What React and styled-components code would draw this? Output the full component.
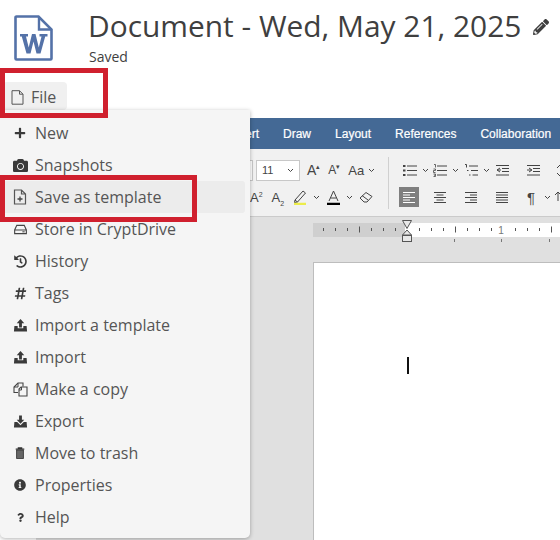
import React from "react";
import styled, { createGlobalStyle } from "styled-components";
import { FaPlus, FaCamera, FaHistory, FaHashtag, FaInfoCircle, FaQuestion, FaPencilAlt } from "react-icons/fa";

const Global = createGlobalStyle`
  html, body { margin: 0; padding: 0; background: #fff; }
  body { font-family: "Open Sans", sans-serif; color: #3f3f3f; }
`;
const Page = styled.div`
  position: relative; width: 560px; height: 540px; overflow: hidden; background: #fff;
  display: flex; flex-direction: column;
`;
const Header = styled.header`
  display: flex; height: 82px; padding: 0 0 0 14px; box-sizing: border-box;
`;
const DocIcon = styled.svg`
  width: 39px; height: 46px; margin-top: 15px; flex: none;
`;
const TitleBlock = styled.div`
  margin-left: 35px; display: flex; flex-direction: column;
`;
const TitleRow = styled.div`
  display: flex; align-items: center; gap: 12px; height: 49px; margin-top: 1px;
`;
const Title = styled.h1`
  margin: 0; font-weight: 400; font-size: 29.9px; line-height: 49px; color: #3f3f3f; white-space: nowrap;
`;
const PencilWrap = styled.span`
  display: flex; margin-top: 2px; margin-left: 0; color: #3f3f3f;
`;
const Saved = styled.div`
  font-size: 14px; line-height: 16px; color: #3f3f3f; margin-left: 1px; margin-top: -1px;
`;
const FileBar = styled.div`
  height: 36px; padding-left: 3px;
`;
const FileButton = styled.button`
  display: flex; align-items: center; gap: 7px; height: 28px; width: 64px; padding: 2px 0 0 8px; box-sizing: border-box;
  background: #f0f0f0; border: 0; border-radius: 4px; font: 400 16px "Open Sans", sans-serif; color: #555;
`;
const Editor = styled.main`
  flex: 1; display: flex; flex-direction: column; min-height: 0; padding-left: 36px; background: #fff;
`;
const Tabs = styled.nav`
  height: 31px; flex: none; background: #446995; display: flex; align-items: center; gap: 24px; padding-left: 209px;
`;
const Tab = styled.span`
  font: 400 12px "Liberation Sans", sans-serif; color: #fff; -webkit-text-stroke: 0.2px #fff; white-space: nowrap;
`;
const Toolbar = styled.div`
  height: 68px; flex: none; background: #f1f1f1; border-bottom: 1px solid #cbcbcb; box-sizing: border-box;
  display: flex; padding-left: 204px; padding-top: 10px;
`;
const ToolColumn = styled.div`
  display: flex; flex-direction: column; gap: 5px; width: ${p => p.$w}px; flex: none;
`;
const ToolRow = styled.div`
  display: flex; align-items: center; height: 22px; flex: none; padding-left: ${p => p.$pl || 0}px;
`;
const Divider = styled.div`
  width: 1px; height: 52px; background: #d0d0d0; margin-top: -2px; flex: none;
`;
const Select = styled.div`
  width: 44px; height: 21px; box-sizing: border-box; background: #fff; border: 1px solid #c8c8c8; display: flex; align-items: center;
  justify-content: space-between; padding: 0 5px; font: 400 11px "Liberation Sans", sans-serif; color: #444; flex: none;
`;
const SelectStub = styled.div`
  width: 13px; height: 21px; margin-right: 3px; box-sizing: border-box; background: #fff; border: 1px solid #c8c8c8; border-left: 0; flex: none;
`;
const ToolGlyph = styled.span`
  font: 400 ${p => p.$size || 13}px "Liberation Sans", sans-serif; color: #444; white-space: nowrap; line-height: 1; flex: none;
  sup, sub { font-size: 7px; line-height: 0; }
`;
const Spacer = styled.span`
  width: ${p => p.$w}px; flex: none;
`;
const Active = styled.span`
  width: 20px; height: 20px; background: #7f7f7f; display: flex; align-items: center; justify-content: center; flex: none;
`;
const ToolSvg = styled.svg`
  flex: none; display: block; fill: none; stroke: ${p => p.$stroke || "#444"}; stroke-width: 1;
`;
const ChevSvg = styled(ToolSvg)`
  margin-left: 4px;
`;
const Canvas = styled.div`
  flex: 1; background: #e0e0e0; display: flex; flex-direction: column; padding-left: 277px; min-height: 0;
  overflow: hidden;
`;
const Ruler = styled.div`
  margin-top: 6px; height: 14px; width: 300px; flex: none;
`;
const RulerArt = styled.svg`
  display: block; overflow: visible;
`;
const Paper = styled.div`
  margin-top: 25px; flex: 1; background: #fff; border-left: 1px solid #bdbdbd; border-top: 1px solid #bdbdbd; width: 300px;
`;
const Cursor = styled.div`
  width: 2px; height: 17px; background: #111; margin: 94px 0 0 93px;
`;
const Menu = styled.div`
  position: absolute; left: 0; top: 110px; width: 250px; height: 428px; background: #f5f5f5; border-radius: 0 0 5px 5px;
  box-shadow: 0 1px 4px rgba(0,0,0,.3); padding-top: 7px; box-sizing: border-box; display: flex; flex-direction: column;
`;
const Item = styled.div`
  height: 32px; flex: none; display: flex; align-items: center; padding-left: 12px; box-sizing: border-box;
  font-size: 16px; color: #555; background: ${p => p.$on ? "#ececec" : "transparent"}; margin-right: ${p => p.$on ? 5 : 0}px;
  border-radius: 3px;
`;
const ItemIcon = styled.span`
  width: 16px; height: 16px; display: flex; align-items: center; justify-content: center; margin-right: 7px; flex: none; color: #3a3a3a;
  svg { width: ${p => p.$s || 13}px; height: ${p => p.$s || 13}px; display: block; }
`;
const Mark = styled.div`
  position: absolute; border: 5px solid #d0202e; box-sizing: border-box; pointer-events: none;
  left: ${p => p.$l}px; top: ${p => p.$t}px; width: ${p => p.$w}px; height: ${p => p.$h}px;
`;

const S = ({ children, w = 16, h = 16, stroke }) => (
  <ToolSvg viewBox={`0 0 ${w} ${h}`} width={w} height={h} $stroke={stroke}>{children}</ToolSvg>
);
const Chev = () => <ChevSvg viewBox="0 0 7 5" width={7} height={5}><path d="M1 1l2.5 2.5L6 1" /></ChevSvg>;

const TemplateIcon = () => (
  <svg viewBox="0 0 14 16"><path d="M1.5 1h7l4 4v10h-11z M8.5 1v4h4" fill="none" stroke="#555" strokeWidth="1.2" /><path d="M7 7.5v5M4.5 10h5" stroke="#444" strokeWidth="1.3" /></svg>
);
const DriveIcon = () => (
  <svg viewBox="0 0 14 12"><path d="M3 1.500h8l2.300 5v4H.7v-4z M.7 6.500h12.600" fill="none" stroke="#444" strokeWidth="1.200" /><path d="M9 8.500h2.500" stroke="#444" strokeWidth="1.100" /></svg>
);
const UploadIcon = () => (
  <svg viewBox="0 0 16 14"><path d="M8 0l4 4.500H9.500V9h-3V4.500H4z" fill="#3a3a3a" /><path d="M1.500 7.500H5v2.500h6V7.500h3.500l.5 6H1z" fill="#3a3a3a" /></svg>
);
const DownloadIcon = () => (
  <svg viewBox="0 0 16 14"><path d="M8 9.500l4-4.500H9.500V.5h-3V5H4z" fill="#3a3a3a" /><path d="M1.500 7.500H4.500l3.500 3.500 3.500-3.500h3l.5 6H1z" fill="#3a3a3a" /></svg>
);
const CopyIcon = () => (
  <svg viewBox="0 0 15 15"><path d="M5 10.500H1V5l4-4h5v3.500" fill="none" stroke="#444" strokeWidth="1.100" /><path d="M5 1.200V5H1" fill="none" stroke="#444" strokeWidth="1" /><path d="M8 5h6v9H6V7z" fill="none" stroke="#444" strokeWidth="1.100" /><path d="M8.500 5v3H6" fill="none" stroke="#444" strokeWidth="1" /></svg>
);
const TrashIcon = () => (
  <svg viewBox="0 0 12 14"><path d="M1 2.500h10M4 2.500V1h4v1.500" fill="none" stroke="#333" strokeWidth="1.300" /><path d="M2 3.500h8v10H2z" fill="#666" stroke="#333" strokeWidth="1" /></svg>
);
const FileOutline = () => (
  <svg viewBox="0 0 13 15" width="13" height="15"><path d="M1 .7h7.500L12 4.200v10H1z M8.500 .7v3.500H12" fill="none" stroke="#555" strokeWidth="1" /></svg>
);

const items = [
  ["New", <FaPlus />, 12],
  ["Snapshots", <FaCamera />, 15],
  ["Save as template", <TemplateIcon />, 16, true],
  ["Store in CryptDrive", <DriveIcon />, 13],
  ["History", <FaHistory />, 13],
  ["Tags", <FaHashtag />, 13],
  ["Import a template", <UploadIcon />, 15],
  ["Import", <UploadIcon />, 15],
  ["Make a copy", <CopyIcon />, 15],
  ["Export", <DownloadIcon />, 15],
  ["Move to trash", <TrashIcon />, 12],
  ["Properties", <FaInfoCircle />, 12],
  ["Help", <FaQuestion />, 9],
];

const ListIcon = ({ kind }) => (
  <S w={15} h={13}>
    {kind === "b" && <path d="M0 2h2.500M0 6.500h2.500M0 11h2.500" strokeWidth="2" />}
    {kind === "n" && <path d="M1 .5h1.500v3M.5 5h2v1.500h-2v2h2M.5 10h2v1.200H1M2.500 11.200v1.300h-2" strokeWidth=".8" />}
    {kind === "m" && <path d="M1 .5h1.500v3M3 6.500h1.500M5 11h1.500" strokeWidth="1" />}
    <path d={kind === "m" ? "M5 2h9M7 6.500h7M8.500 11h5.500" : "M4 2h10M4 6.500h10M4 11h10"} />
  </S>
);
const IndentIcon = ({ out }) => (
  <S w={13} h={11}>
    <path d="M0 .5h13M6 3.500h7M6 6.500h7M0 10h13" />
    <path d={out ? "M4 3L1 5l3 2M1 5h4" : "M2 3l3 2-3 2M0 5h4"} />
  </S>
);
const AlignIcon = ({ a, light }) => {
  const rows = { l: [12, 7], c: [12, 7], r: [12, 7], j: [12, 12] }[a];
  return (
    <S w={12} h={11} stroke={light ? "#fff" : "#444"}>
      {[0, 1, 2, 3, 4].map(i => {
        const w = rows[i % 2];
        const x = a === "c" ? (12 - w) / 2 : a === "r" ? 12 - w : 0;
        return <path key={i} d={`M${x} ${i * 2.5 + .5}h${w}`} />;
      })}
    </S>
  );
};

const Ticks = () => {
  const ticks = [];
  for (let i = 0; i < 21; i++) {
    const x = 10 + i * 12;
    if (i === 7 || i === 15) continue;
    const big = i % 8 === 3;
    ticks.push(<path key={i} d={`M${x + .5} ${big ? 3.5 : 5}v${big ? 6 : 3}`} stroke="#555" strokeWidth="1" />);
  }
  [141, 188, 236].forEach(x => ticks.push(<path key={`b${x}`} d={`M${x + .5} 16v3`} stroke="#777" strokeWidth="1" />));
  return ticks;
};

export default function App() {
  return (
    <Page>
      <Global />
      <Header>
        <DocIcon viewBox="0 0 39 46">
          <path d="M1.500 2.500a1 1 0 0 1 1-1h22l13 13v29a1 1 0 0 1-1 1h-34a1 1 0 0 1-1-1z" fill="#fff" stroke="#5472a8" strokeWidth="2.600" />
          <path d="M25 2v12.500h12" fill="none" stroke="#5472a8" strokeWidth="2.400" />
          <path d="M6 19h8v2.500h-2l2.700 11 3.300-13.500h3.500l3.300 13.500 2.700-11h-2V19h8v2.500h-2.300l-4.700 17h-4l-3-12-3 12h-4l-4.700-17H6z" fill="#5472a8" />
        </DocIcon>
        <TitleBlock>
          <TitleRow>
            <Title>Document - Wed, May 21, 2025</Title>
            <PencilWrap><FaPencilAlt size={16} /></PencilWrap>
          </TitleRow>
          <Saved>Saved</Saved>
        </TitleBlock>
      </Header>
      <FileBar>
        <FileButton><FileOutline />File</FileButton>
      </FileBar>
      <Editor>
        <Tabs>
          <Tab>ert</Tab><Tab>Draw</Tab><Tab>Layout</Tab><Tab>References</Tab><Tab>Collaboration</Tab>
        </Tabs>
        <Toolbar>
          <ToolColumn $w={148}>
            <ToolRow>
              <SelectStub />
              <Select>11<Chev /></Select>
              <Spacer $w={7} /><ToolGlyph $size={14}>A<sup>▴</sup></ToolGlyph>
              <Spacer $w={8} /><ToolGlyph $size={12}>A<sup>▾</sup></ToolGlyph>
              <Spacer $w={8} /><ToolGlyph $size={13}>Aa</ToolGlyph><Chev />
            </ToolRow>
            <ToolRow $pl={10}>
              <ToolGlyph $size={13}>A<sup>2</sup></ToolGlyph>
              <Spacer $w={9} /><ToolGlyph $size={13}>A<sub>2</sub></ToolGlyph>
              <Spacer $w={9} />
              <S w={16} h={16}>
                <path d="M2 11l8-9 2.500 2-8 9z M2 11l-.5 2.500 3-.5" />
                <path d="M1 15h12" stroke="#ecec4a" strokeWidth="2.500" />
              </S>
              <Chev />
              <Spacer $w={6} />
              <S w={16} h={16}>
                <path d="M3 12L7.500 2 12 12M4.500 9h6" /><path d="M1 15h13" stroke="#000" strokeWidth="2.500" />
              </S>
              <Chev />
              <Spacer $w={6} />
              <S w={15} h={12}><path d="M1 7l6-5.500 6 4-5 5.500H5z M3 4.500l6 4.500" /></S>
            </ToolRow>
          </ToolColumn>
          <Divider />
          <ToolColumn $w={171}>
            <ToolRow $pl={14}>
              <ListIcon kind="b" /><Chev />
              <Spacer $w={4} />
              <ListIcon kind="n" /><Chev />
              <Spacer $w={5} />
              <ListIcon kind="m" /><Chev />
              <Spacer $w={6} />
              <IndentIcon out />
              <Spacer $w={18} />
              <IndentIcon />
              <Spacer $w={16} />
              <S w={8} h={13}><path d="M1 4l3-3 3 3M1 9l3 3 3-3" /></S>
            </ToolRow>
            <ToolRow $pl={10}>
              <Active><AlignIcon a="l" light /></Active>
              <Spacer $w={15} />
              <AlignIcon a="c" />
              <Spacer $w={19} />
              <AlignIcon a="r" />
              <Spacer $w={19} />
              <AlignIcon a="j" />
              <Spacer $w={19} />
              <ToolGlyph $size={15}>¶</ToolGlyph>
              <Spacer $w={5} />
              <Chev />
              <Spacer $w={3} />
              <S w={8} h={13}><path d="M4 1v9M1 4l3-3 3 3" /></S>
            </ToolRow>
          </ToolColumn>
        </Toolbar>
        <Canvas>
          <Ruler>
            <RulerArt width="300" height="14" viewBox="0 0 300 14">
              <rect x="0" y="0" width="92" height="14" fill="#cfcfcf" />
              <rect x="92" y="0" width="208" height="14" fill="#fff" />
              <Ticks />
              <path d="M89.500 -2.500h9l-4.500 8z" fill="#e8e8e8" stroke="#555" />
              <path d="M94 7l4.500 5h-9z" fill="#e8e8e8" stroke="#555" />
              <rect x="89.500" y="12.500" width="9" height="6" fill="#e8e8e8" stroke="#555" />
              <text x="188" y="11" fontFamily="Liberation Sans" fontSize="10" fill="#777" textAnchor="middle">1</text>
            </RulerArt>
          </Ruler>
          <Paper><Cursor /></Paper>
        </Canvas>
      </Editor>
      <Menu>
        {items.map(([label, icon, s, on]) => (
          <Item key={label} $on={on}>
            <ItemIcon $s={s}>{icon}</ItemIcon>{label}
          </Item>
        ))}
      </Menu>
      <Mark $l={0} $t={68} $w={108} $h={50} />
      <Mark $l={0} $t={175} $w={197} $h={47} />
    </Page>
  );
}
